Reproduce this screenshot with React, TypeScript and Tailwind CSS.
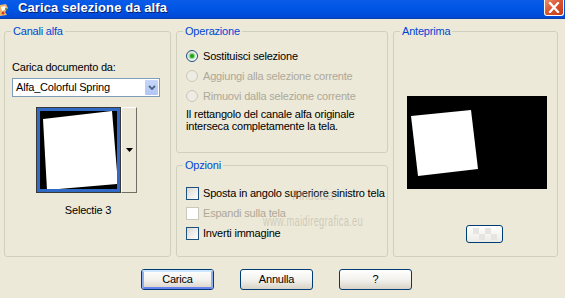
import React from 'react';

const ui = "font-['Liberation_Sans',Arial,sans-serif] text-[11px] tracking-[-0.2px] leading-[13px]";

function Radio({ label, checked = false, disabled = false }: { label: string; checked?: boolean; disabled?: boolean }) {
  return (
    <div className="flex items-center h-[12px] gap-[5px]">
      <span
        className={
          disabled
            ? 'w-[12px] h-[12px] rounded-full border border-[#CAC8BB] bg-[#EFEDE3] flex items-center justify-center'
            : 'w-[12px] h-[12px] rounded-full border border-[#1C5180] bg-gradient-to-br from-[#DCD9D0] to-white flex items-center justify-center'
        }
      >
        {checked && <span className="w-[4px] h-[4px] rounded-full bg-[#21A121] shadow-[0_0_1px_1px_#7BD77B]" />}
      </span>
      <span className={disabled ? 'text-[#ACA899]' : 'text-black'}>{label}</span>
    </div>
  );
}

function Check({ label, disabled = false }: { label: string; disabled?: boolean }) {
  return (
    <div className="flex items-center h-[13px] gap-[4px]">
      <span
        className={
          disabled
            ? 'w-[13px] h-[13px] border border-[#CAC8BB] bg-white'
            : 'w-[13px] h-[13px] border border-[#1C5180] bg-gradient-to-br from-[#DCD9D0] to-white'
        }
      />
      <span className={disabled ? 'text-[#ACA899]' : 'text-black'}>{label}</span>
    </div>
  );
}

function Group({ title, className, children }: { title: string; className: string; children?: React.ReactNode }) {
  return (
    <fieldset className={`border border-[#D0D0BF] rounded-[3px] ${className}`}>
      <legend className="ml-[6px] px-[2px] text-[#0046D5]">{title}</legend>
      {children}
    </fieldset>
  );
}

function Button({ label, primary = false }: { label: string; primary?: boolean }) {
  return (
    <button className="w-[73px] h-[21px] rounded-[3px] border border-[#003C74] bg-gradient-to-b from-white via-[#F3F2EE] to-[#D8D3C7] p-0">
      <span
        className={
          primary
            ? 'flex items-center justify-center h-full rounded-[2px] border-2 border-[#8EAFEF] border-t-[#CEE7FF] border-b-[#6982EE]'
            : 'flex items-center justify-center h-full'
        }
      >
        {label}
      </span>
    </button>
  );
}

export default function App() {
  return (
    <div className={`w-[565px] h-[298px] bg-[#ECE9D8] overflow-hidden flex flex-col ${ui}`}>
      {/* title bar */}
      <div className="h-[19px] flex justify-between bg-gradient-to-b from-[#0A5BE8] via-[#0055E5] to-[#0046D4] border-b border-[#0A3FB0]">
        <div className="flex items-center gap-[9px]">
          <svg width="9" height="14" viewBox="0 0 9 14" className="mt-[1px]">
            <path d="M0 2 L6 1 L8 5 L5 9 L7 12 L0 13 Z" fill="#E9B66B" />
            <path d="M1 4 L5 3 L6 6 L2 8 Z" fill="#FFFFFF" />
            <circle cx="3" cy="10" r="1.5" fill="#D33A2C" />
            <circle cx="6" cy="6" r="1" fill="#2E8B3E" />
          </svg>
          <span className="font-['Liberation_Sans',Arial,sans-serif] font-bold text-[13px] tracking-[0.1px] text-white [text-shadow:1px_1px_#0A1E6A] -mt-[4px]">
            Carica selezione da alfa
          </span>
        </div>
        <div className="w-[20px] h-[16px] mr-[1px] rounded-b-[3px] border border-t-0 border-white bg-gradient-to-br from-[#E98C6C] via-[#D9522D] to-[#C23A17] flex items-center justify-center">
          <svg width="12" height="11" viewBox="0 0 12 11">
            <path d="M2 1 L10 10 M10 1 L2 10" stroke="white" strokeWidth="2.2" strokeLinecap="square" />
          </svg>
        </div>
      </div>

      {/* groups */}
      <div className="flex ml-[4px] mt-[6px] gap-[5px]">
        <Group title="Canali alfa" className="w-[167px] h-[232px] flex flex-col">
          <div className="ml-[7px] mt-[23px]">Carica documento da:</div>
          <div className="ml-[7px] mt-[4px] w-[148px] h-[19px] border border-[#7F9DB9] bg-white flex items-center justify-between">
            <span className="pl-[3px]">Alfa_Colorful Spring</span>
            <span className="w-[15px] h-[17px] rounded-[2px] border border-white bg-gradient-to-b from-[#C6D5FC] to-[#B1C6F4] flex items-center justify-center">
              <svg width="8" height="5" viewBox="0 0 8 5">
                <path d="M1 1 L4 4 L7 1" stroke="#4D6185" strokeWidth="1.8" fill="none" />
              </svg>
            </span>
          </div>
          <div className="ml-[31px] mt-[10px] flex h-[86px]">
            <div className="w-[85px] h-[86px] border border-[#3A3A3A] bg-white">
              <div className="w-full h-full border-[3px] border-[#316AC5] bg-black">
                <svg width="77" height="78" viewBox="0 0 77 78" className="block">
                  <rect width="77" height="78" fill="#000" />
                  <polygon points="3,8 72,0 78,73 7,79" fill="#fff" />
                </svg>
              </div>
            </div>
            <div className="w-[16px] h-[86px] border border-t-white border-l-white border-r-[#716F64] border-b-[#716F64] bg-[#ECE9D8] flex items-center justify-center">
              <svg width="7" height="4" viewBox="0 0 7 4">
                <polygon points="0,0 7,0 3.5,4" fill="#000" />
              </svg>
            </div>
          </div>
          <div className="mt-[11px] pl-[26px] text-center w-[140px]">Selectie 3</div>
        </Group>

        <div className="flex flex-col gap-[6px]">
          <Group title="Operazione" className="w-[212px] h-[128px] flex flex-col">
            <div className="ml-[9px] mt-[12px] flex flex-col gap-[8px]">
              <Radio label="Sostituisci selezione" checked />
              <Radio label="Aggiungi alla selezione corrente" disabled />
              <Radio label="Rimuovi dalla selezione corrente" disabled />
            </div>
            <div className="ml-[9px] mt-[6px] leading-[12px]">
              Il rettangolo del canale alfa originale
              <br />
              interseca completamente la tela.
            </div>
          </Group>
          <Group title="Opzioni" className="w-[212px] h-[98px] flex flex-col relative">
            <div className="ml-[9px] mt-[15px] flex flex-col gap-[7px]">
              <Check label="Sposta in angolo superiore sinistro tela" />
              <Check label="Espandi sulla tela" disabled />
              <Check label="Inverti immagine" />
            </div>
            {/* watermark */}
            <span className="absolute left-[115px] top-[16px] text-[15px] text-[#B9B5A6]/50 scale-x-[0.75] origin-left pointer-events-none">
              Pinuccia
            </span>
            <span className="absolute left-[86px] top-[42px] text-[15px] tracking-[0.5px] text-[#B9B5A6]/60 scale-x-[0.62] origin-left pointer-events-none">
              www.maidiregrafica.eu
            </span>
          </Group>
        </div>

        <Group title="Anteprima" className="w-[165px] h-[232px] flex flex-col">
          <svg width="140" height="93" viewBox="0 0 140 93" className="ml-[13px] mt-[58px] block">
            <rect width="140" height="93" fill="#000" />
            <polygon points="4,20 64,14 71,73 11,80" fill="#fff" />
          </svg>
          <div className="ml-[72px] mt-[36px] w-[37px] h-[18px] rounded-[3px] border border-[#003C74] bg-gradient-to-b from-white to-[#ECEBE6] flex items-center justify-center">
            <svg width="24" height="12" viewBox="0 0 24 12">
              <rect x="0" y="0" width="6" height="6" fill="#E6E5E0" />
              <rect x="12" y="0" width="6" height="6" fill="#E6E5E0" />
              <rect x="6" y="6" width="6" height="6" fill="#E6E5E0" />
              <rect x="18" y="6" width="6" height="6" fill="#E6E5E0" />
            </svg>
          </div>
        </Group>
      </div>

      {/* buttons */}
      <div className="flex ml-[141px] mt-[12px] gap-[26px]">
        <Button label="Carica" primary />
        <Button label="Annulla" />
        <Button label="?" />
      </div>
    </div>
  );
}
